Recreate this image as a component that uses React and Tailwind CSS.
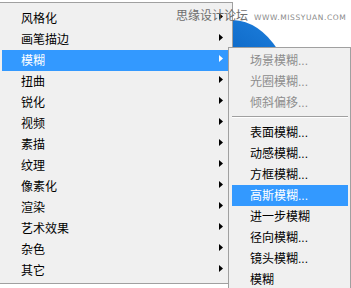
const mainItems = [
  "风格化",
  "画笔描边",
  "模糊",
  "扭曲",
  "锐化",
  "视频",
  "素描",
  "纹理",
  "像素化",
  "渲染",
  "艺术效果",
  "杂色",
  "其它",
];

const subTop = [
  { label: "场景模糊...", disabled: true },
  { label: "光圈模糊...", disabled: true },
  { label: "倾斜偏移...", disabled: true },
];

const subBottom = [
  { label: "表面模糊..." },
  { label: "动感模糊..." },
  { label: "方框模糊..." },
  { label: "高斯模糊...", active: true },
  { label: "进一步模糊" },
  { label: "径向模糊..." },
  { label: "镜头模糊..." },
  { label: "模糊" },
];

const font = { fontFamily: '"Liberation Sans", "Noto Sans CJK SC", sans-serif' };

const Arrow = ({ white }) => (
  <svg width="4" height="7" viewBox="0 0 4 7" className="mb-[4px]">
    <polygon points="0,0 4,3.5 0,7" fill={white ? "#ffffff" : "#000000"} />
  </svg>
);

const SubItem = ({ label, disabled, active }) => (
  <div
    className={
      "h-[21px] flex items-center pl-[18px] text-[12px] leading-none " +
      (active
        ? "bg-[#3399ff] text-white"
        : disabled
        ? "text-[#8d8d8d]"
        : "text-black")
    }
  >
    {label}
  </div>
);

const App = () => {
  return (
    <div
      className="relative w-[351px] h-[288px] overflow-hidden bg-white"
      style={font}
    >
      {/* blue circle behind the menus */}
      <svg
        width="60"
        height="34"
        viewBox="0 0 60 34"
        className="absolute left-[233px] top-[16px]"
      >
        <defs>
          <linearGradient id="blueFill" x1="1" y1="0" x2="0" y2="1">
            <stop offset="0" stopColor="#4aa2ee" />
            <stop offset="0.25" stopColor="#1a7ad8" />
            <stop offset="1" stopColor="#0f6bc9" />
          </linearGradient>
        </defs>
        <path d="M0,4 Q26,5 45,34 L0,34 Z" fill="url(#blueFill)" />
      </svg>

      {/* main filter menu */}
      <div className="mt-[2px] w-[233px] border-t border-b border-r border-[#a0a0a0] bg-[#f0f0f0] px-[2px] pt-[5px] pb-[2px]">
        {mainItems.map((item) => {
          const active = item === "模糊";
          return (
            <div
              key={item}
              className={
                "h-[21px] flex items-center justify-between pl-[19px] pr-[7px] text-[12px] leading-none " +
                (active ? "bg-[#3399ff] text-white" : "text-black")
              }
            >
              <span>{item}</span>
              <Arrow white={active} />
            </div>
          );
        })}
      </div>

      {/* watermark */}
      <div className="absolute left-[176px] top-[7px] flex items-baseline gap-[6px] pointer-events-none">
        <span className="text-[12px] text-[#6e6e6e]">思缘设计论坛</span>
        <span
          className="text-[7.5px] tracking-[0.6px] text-[#8a8a8a]"
          style={{ fontFamily: '"DejaVu Sans", sans-serif' }}
        >
          WWW.MISSYUAN.COM
        </span>
      </div>

      {/* blur submenu */}
      <div className="absolute left-[228px] top-[47px] w-[123px] h-[250px] border border-[#a0a0a0] bg-[#f0f0f0] pt-[2px] pl-[3px] pr-[2px]">
        {subTop.map((s) => (
          <SubItem key={s.label} {...s} />
        ))}
        <div className="mt-[3px] mb-[4px] border-t border-b border-t-[#a0a0a0] border-b-white" />
        {subBottom.map((s) => (
          <SubItem key={s.label} {...s} />
        ))}
      </div>
    </div>
  );
};

export default App;
